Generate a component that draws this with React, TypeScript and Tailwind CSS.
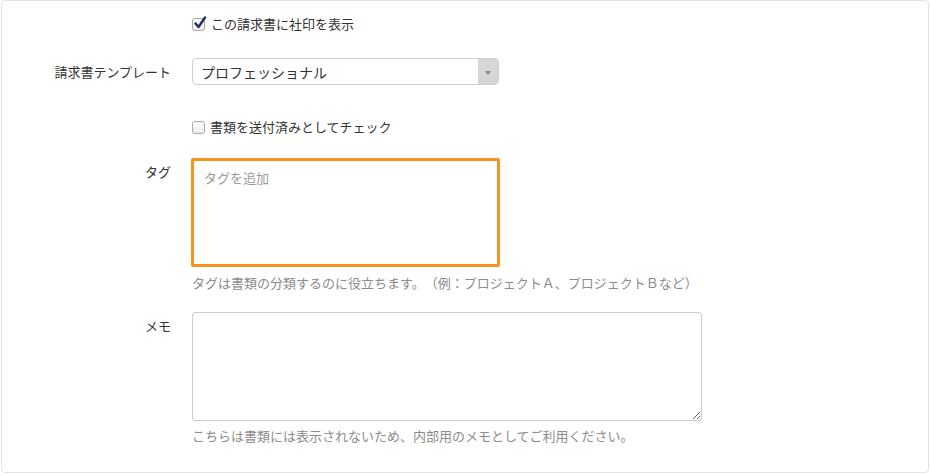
import { useState } from 'react';

const font = { fontFamily: '"Noto Sans CJK JP", "Liberation Sans", sans-serif' };

const CheckBox = ({ checked, onToggle }: { checked: boolean; onToggle: () => void }) => (
  <span
    onClick={onToggle}
    className="relative inline-flex h-[13px] w-[13px] shrink-0 cursor-pointer items-center justify-center rounded-[3px] border border-[#a9a9a9] bg-gradient-to-b from-white to-[#ececec]"
  >
    {checked && (
      <svg viewBox="0 0 14 14" className="absolute -top-[3px] left-[0px] h-[14px] w-[14px]">
        <path d="M2.5 7.5 L5.5 11 L12 1.5" fill="none" stroke="#1d2f5c" strokeWidth="2.4" strokeLinecap="round" strokeLinejoin="round" />
      </svg>
    )}
  </span>
);

export default function App() {
  const [stamp, setStamp] = useState(true);
  const [sent, setSent] = useState(false);

  return (
    <div className="h-[475px] w-[930px] bg-white pl-[1px] [text-spacing-trim:space-all]" style={font}>
      <div className="h-[473px] w-[928px] rounded-[4px] border border-[#e3e3e3] pt-[13px] text-[13px] leading-[20px] text-[#333]">
        {/* 社印 */}
        <div className="flex items-center gap-[21px]">
          <div className="w-[169px]" />
          <label className="flex items-center gap-[6px]">
            <CheckBox checked={stamp} onToggle={() => setStamp(!stamp)} />
            <span>この請求書に社印を表示</span>
          </label>
        </div>

        {/* テンプレート */}
        <div className="mt-[24px] flex items-center gap-[21px]">
          <div className="w-[169px] text-right">請求書テンプレート</div>
          <div className="flex h-[27px] w-[307px] overflow-hidden rounded-[4px] border border-[#cfcfcf]">
            <div className="flex flex-1 items-center pl-[8px] text-[14px] text-[#333]">プロフェッショナル</div>
            <div className="flex w-[20px] items-center justify-center bg-[#d6d6d6]">
              <svg viewBox="0 0 6 4" className="mt-[3px] h-[4px] w-[6px]">
                <path d="M0 0 H6 L3 4 Z" fill="#8a8a8a" />
              </svg>
            </div>
          </div>
        </div>

        {/* 送付済み */}
        <div className="mt-[32px] flex items-center gap-[21px]">
          <div className="w-[169px]" />
          <label className="flex items-center gap-[5px]">
            <CheckBox checked={sent} onToggle={() => setSent(!sent)} />
            <span>書類を送付済みとしてチェック</span>
          </label>
        </div>

        {/* タグ */}
        <div className="mt-[21px] flex gap-[20px]">
          <div className="w-[169px] pt-[4px] text-right">タグ</div>
          <div>
            <div className="h-[109px] w-[309px] rounded-[2px] border-[3px] border-[#f7931e] px-[10px] pt-[7px] text-[#9a9a9a]">
              タグを追加
            </div>
            <div className="mt-[6px] pl-[1px] text-[#8c8c8c]">
              タグは書類の分類するのに役立ちます。（例：プロジェクトＡ、プロジェクトＢなど）
            </div>
          </div>
        </div>

        {/* メモ */}
        <div className="mt-[19px] flex gap-[21px]">
          <div className="w-[169px] pt-[4px] text-right">メモ</div>
          <div>
            <textarea
              className="block h-[109px] w-[510px] rounded-[3px] border border-[#cccccc] bg-white p-[8px] text-[13px] outline-none"
              style={font}
            />
            <div className="mt-[5px] text-[#8c8c8c]">
              こちらは書類には表示されないため、内部用のメモとしてご利用ください。
            </div>
          </div>
        </div>
      </div>
    </div>
  );
}
